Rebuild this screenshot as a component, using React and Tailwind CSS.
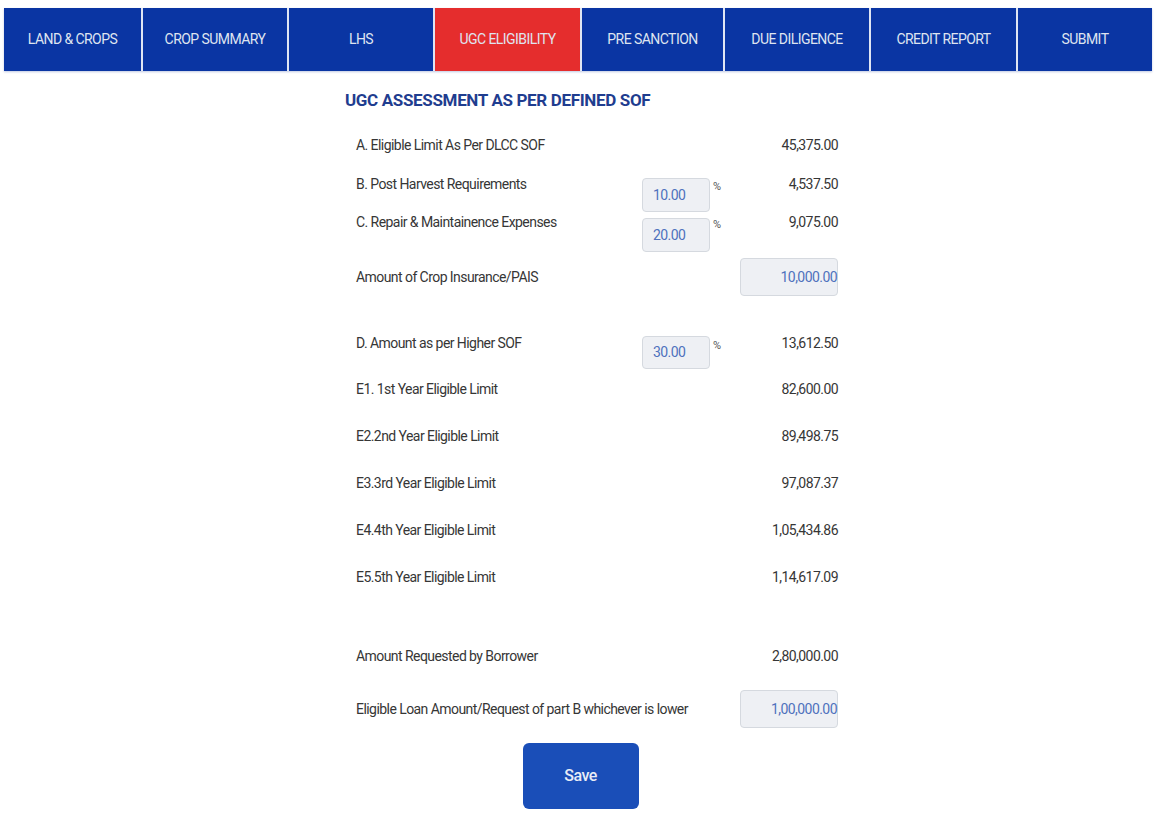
import React from "react";

const tabs = [
    { name: "LAND & CROPS", w: "w-[137px]" },
    { name: "CROP SUMMARY", w: "w-[144px]" },
    { name: "LHS", w: "w-[144px]" },
    { name: "UGC ELIGIBILITY", w: "w-[145px]", active: true },
    { name: "PRE SANCTION", w: "w-[141px]" },
    { name: "DUE DILIGENCE", w: "w-[144px]" },
    { name: "CREDIT REPORT", w: "w-[145px]" },
    { name: "SUBMIT", w: "w-[134px]" },
];

const yearRows = [
    ["E1. 1st Year Eligible Limit", "82,600.00"],
    ["E2.2nd Year Eligible Limit", "89,498.75"],
    ["E3.3rd Year Eligible Limit", "97,087.37"],
    ["E4.4th Year Eligible Limit", "1,05,434.86"],
    ["E5.5th Year Eligible Limit", "1,14,617.09"],
];

// screenshot text is narrow, so Roboto a bit small and tight
const font = "font-['Roboto',sans-serif] tracking-[-0.035em]";

const PercentRow = ({ label, pct, value, boxMt, boxH, mt }) => (
    <div className={`flex items-start ${mt}`}>
        <div className="w-[286px] leading-[20px] whitespace-nowrap">{label}</div>
        <div className={`w-[68px] ${boxMt} ${boxH} flex items-center pl-[10px] bg-[#eef0f4] border border-[#d5d9df] rounded text-[#4f72bd]`}>
            {pct}
        </div>
        <div className="w-[30px] pl-[3px] text-[11px] leading-[20px] mt-[3px] text-[#555]">%</div>
        <div className="w-[98px] text-right leading-[20px]">{value}</div>
    </div>
);

const BoxRow = ({ label, value, mt }) => (
    <div className={`flex items-center ${mt}`}>
        <div className="w-[384px] leading-[20px] whitespace-nowrap">{label}</div>
        <div className="w-[98px] h-[38px] flex items-center justify-end bg-[#eef0f4] border border-[#d5d9df] rounded text-[#4f72bd]">
            {value}
        </div>
    </div>
);

const TextRow = ({ label, value, mt }) => (
    <div className={`flex items-start leading-[20px] ${mt}`}>
        <div className="flex-1 whitespace-nowrap">{label}</div>
        <div className="w-[98px] text-right">{value}</div>
    </div>
);

export default function App() {
    return (
        <div className={`min-h-[814px] bg-white ${font} pt-[8px]`}>
            {/* tab bar */}
            <div className="ml-[4px] w-[1148px] flex gap-[2px] bg-[#dfe5f3] shadow-[0_1px_2px_rgba(0,40,140,0.25)]">
                {tabs.map((t) => (
                    <div
                        key={t.name}
                        className={`${t.w} h-[63px] flex items-center justify-center text-[14px] text-[#dfe4f0] ${t.active ? "bg-[#e52d2d]" : "bg-[#0a35a3]"}`}
                    >
                        {t.name}
                    </div>
                ))}
            </div>

            <h2 className="ml-[345px] mt-[17px] text-[17px] leading-[24px] font-bold tracking-[-0.02em] text-[#1f3d8f]">
                UGC ASSESSMENT AS PER DEFINED SOF
            </h2>

            <div className="ml-[356px] w-[482px] text-[14px] text-[#363636]">
                <TextRow mt="mt-[23px]" label="A. Eligible Limit As Per DLCC SOF" value="45,375.00" />
                <PercentRow mt="mt-[19px]" boxMt="mt-[4px]" boxH="h-[34px]" label="B. Post Harvest Requirements" pct="10.00" value="4,537.50" />
                <PercentRow mt="mt-0" boxMt="mt-[6px]" boxH="h-[34px]" label="C. Repair & Maintainence Expenses" pct="20.00" value="9,075.00" />
                <BoxRow mt="mt-[6px]" label="Amount of Crop Insurance/PAIS" value="10,000.00" />
                <PercentRow mt="mt-[37px]" boxMt="mt-[3px]" boxH="h-[33px]" label="D. Amount as per Higher SOF" pct="30.00" value="13,612.50" />

                {yearRows.map(([label, value], i) => (
                    <TextRow key={label} mt={i === 0 ? "mt-[10px]" : "mt-[27px]"} label={label} value={value} />
                ))}

                <TextRow mt="mt-[59px]" label="Amount Requested by Borrower" value="2,80,000.00" />
                <BoxRow mt="mt-[24px]" label="Eligible Loan Amount/Request of part B whichever is lower" value="1,00,000.00" />
            </div>

            <div className="flex justify-center mt-[15px]">
                <button className="w-[116px] h-[66px] rounded-md bg-[#1a4eb8] text-[#e8ecf6] text-[16px] font-medium">
                    Save
                </button>
            </div>
        </div>
    );
}
